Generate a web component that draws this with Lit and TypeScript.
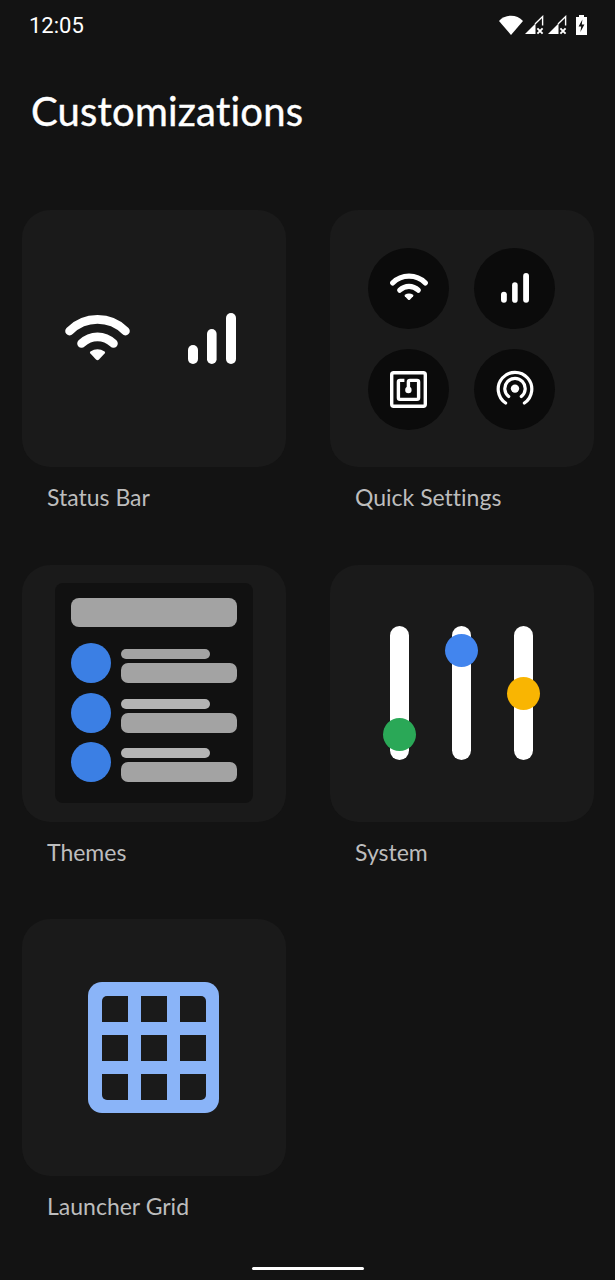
import { LitElement, css, html, svg } from "lit";
import { customElement } from "lit/decorators.js";

const wifiIcon = (w: number) => html`<svg width=${w} viewBox="0 0 65 50" style="display:block">
  <g fill="none" stroke="#fff" stroke-linecap="round" stroke-width="8.8">
    <path d="M4.6 17 C20 1.6 45 1.6 60.4 17" />
    <path d="M16.6 29.4 C26 20.6 39 20.6 48.4 29.4" />
  </g>
  <path d="M25.4 37.4 Q32.5 33 39.6 37.4 Q40.6 38.4 39.6 39.6 L34 45.6 Q32.5 47 31 45.6 L25.4 39.6 Q24.4 38.4 25.4 37.4Z" fill="#fff" />
</svg>`;

const signalIcon = (w: number) => html`<svg width=${w} viewBox="0 0 48 51" style="display:block">
  <g fill="#fff">
    <rect x="0" y="32" width="10" height="19" rx="5" />
    <rect x="19" y="16" width="9.6" height="35" rx="4.8" />
    <rect x="38" y="0" width="10" height="51" rx="5" />
  </g>
</svg>`;

const nfcIcon = html`<svg width="37" height="37" viewBox="0 0 37 37" style="display:block">
  <g fill="none" stroke="#fff" stroke-width="3.4">
    <rect x="1.7" y="1.7" width="33.6" height="33.6" rx="2" />
    <path d="M14.4 9.4 H10 Q8.4 9.4 8.4 11 V26.8 Q8.4 28.4 10 28.4 H27 Q28.6 28.4 28.6 26.8 V11 Q28.6 9.4 27 9.4 H20 Q18.4 9.4 18.4 11 V18" />
  </g>
  <circle cx="18.4" cy="19" r="3.2" fill="#fff" />
</svg>`;

const hotspotIcon = html`<svg width="38" height="38" viewBox="0 0 38 38" style="display:block">
  <g fill="none" stroke="#fff" stroke-width="3.2" stroke-linecap="round">
    <path d="M9.6 33 A16.8 16.8 0 1 1 28.4 33" />
    <path d="M12.7 26.6 A10.2 10.2 0 1 1 25.3 26.6" />
  </g>
  <circle cx="19" cy="18.6" r="4.2" fill="#fff" />
</svg>`;

const GRID_STEPS = [0, 39, 78];
const CELL = 26;
const CORNER = 5;

// Outer corners of the 3x3 grid are rounded, the others stay square.
const cellPath = (x: number, y: number) => {
  const r = CORNER;
  const s = CELL - r;
  const left = 14 + x;
  const top = 14 + y;
  if (x === 0 && y === 0) return `M${left} ${top + r} a${r} ${r} 0 0 1 ${r} -${r} h${s} v${CELL} h-${CELL}Z`;
  if (x === 78 && y === 0) return `M${left} ${top} h${s} a${r} ${r} 0 0 1 ${r} ${r} v${s} h-${CELL}Z`;
  if (x === 0 && y === 78) return `M${left} ${top} h${CELL} v${CELL} h-${s} a${r} ${r} 0 0 1 -${r} -${r}Z`;
  if (x === 78 && y === 78) return `M${left} ${top} h${CELL} v${s} a${r} ${r} 0 0 1 -${r} ${r} h-${s}Z`;
  return `M${left} ${top} h${CELL} v${CELL} h-${CELL}Z`;
};

const gridIcon = html`<svg width="131" height="131" viewBox="0 0 131 131" style="display:block">
  <rect width="131" height="131" rx="14" fill="#8ab4f8" />
  ${GRID_STEPS.flatMap((y) => GRID_STEPS.map((x) => svg`<path d=${cellPath(x, y)} fill="#1a1a1a" />`))}
</svg>`;

const SLIDERS = [
  { top: 91.5, color: "#2aa857" },
  { top: 8, color: "#4285ee" },
  { top: 50.5, color: "#f9b502" },
];

@customElement("app-root")
export class AppRoot extends LitElement {
  static override styles = css`
    :host {
      display: block;
      width: 615px;
      height: 1280px;
      position: relative;
      background: #131313;
      color: #fff;
      font-family: "Lato", "Roboto", sans-serif;
      font-variant-ligatures: none;
      overflow: hidden;
    }
    .status {
      display: flex;
      align-items: center;
      justify-content: space-between;
      height: 50px;
      padding: 0 28px 0 29px;
    }
    .time {
      font: 400 22px "Roboto", sans-serif;
    }
    .status-icons {
      display: block;
    }
    h1 {
      margin: 0;
      padding: 35px 0 0 31px;
      height: 160px;
      box-sizing: border-box;
      font-weight: 400;
      font-size: 40px;
      line-height: 52px;
      letter-spacing: 0.2px;
      -webkit-text-stroke: 0.4px #fff;
    }
    .grid {
      display: grid;
      grid-template-columns: 264px 264px;
      column-gap: 44px;
      grid-auto-rows: 354.5px;
      padding-left: 22px;
    }
    .card {
      height: 257px;
      border-radius: 28px;
      background: #1a1a1a;
      display: flex;
      align-items: center;
      justify-content: center;
      box-sizing: border-box;
    }
    .label {
      margin: 16px 0 0 25px;
      font-size: 23px;
      line-height: 28px;
      color: #bdbdbd;
    }
    .status-card {
      gap: 58px;
      padding-right: 7px;
    }
    .qs {
      display: grid;
      grid-template-columns: 81px 81px;
      grid-auto-rows: 81px;
      gap: 20px 25px;
      margin-right: 1px;
    }
    .qs > div {
      border-radius: 50%;
      background: #0b0b0b;
      display: flex;
      align-items: center;
      justify-content: center;
    }
    .panel {
      width: 198px;
      height: 220px;
      border-radius: 8px;
      background: #111;
      box-sizing: border-box;
      padding: 15px 16px 0;
      display: flex;
      flex-direction: column;
      gap: 16px;
    }
    .panel-head {
      height: 29px;
      border-radius: 8px;
      background: #a3a3a3;
    }
    .rows {
      display: flex;
      flex-direction: column;
      gap: 9.5px;
    }
    .row {
      display: flex;
      gap: 10px;
      align-items: stretch;
      height: 40px;
    }
    .dot {
      width: 40px;
      height: 40px;
      border-radius: 50%;
      background: #3b7fe4;
    }
    .lines {
      flex: 1;
      display: flex;
      flex-direction: column;
      justify-content: flex-end;
      gap: 4px;
    }
    .line-s {
      width: 89px;
      height: 10px;
      border-radius: 5px;
      background: #b4b4b4;
    }
    .row:first-child .line-s {
      background: #a3a3a3;
    }
    .line-l {
      height: 20px;
      border-radius: 7px;
      background: #a3a3a3;
    }
    .sliders {
      display: flex;
      gap: 43px;
      margin-right: 1px;
    }
    .track {
      position: relative;
      width: 19px;
      height: 134px;
      border-radius: 9.5px;
      background: #fff;
    }
    .knob {
      position: absolute;
      left: -7px;
      width: 33px;
      height: 33px;
      border-radius: 50%;
    }
    .launcher {
      padding-right: 1px;
    }
    .home {
      position: absolute;
      left: 252px;
      top: 1267px;
      width: 112px;
      height: 3px;
      border-radius: 2px;
      background: #fff;
    }
  `;

  private renderStatusIcons() {
    const cell = (x: number) => svg`<g transform="translate(${x} 0)">
      <path d="M0 19 L10.5 8.5 V19Z" fill="#fff" />
      <path d="M10 9 L17.6 1.6 V10.5" stroke="#fff" stroke-width="1.4" fill="none" />
      <path d="M12.4 13.4 L17.6 18.6 M17.6 13.4 L12.4 18.6" stroke="#fff" stroke-width="1.9" fill="none" />
    </g>`;
    return html`<svg class="status-icons" width="88" height="20" viewBox="0 0 88 20">
      <path d="M0 6 C6 -1 18 -1 24 6 L12 20Z" fill="#fff" />
      ${cell(26)}
      ${cell(49)}
      <path fill="#fff" fill-rule="evenodd" d="M80 0 h5 v2 h3 v18 h-11 v-18 h3Z M83.4 4.4 L79.6 11.4 H82.2 L81.4 17 L85.4 9.6 H82.8Z" />
    </svg>`;
  }

  override render() {
    return html`
      <div class="status">
        <span class="time">12:05</span>
        ${this.renderStatusIcons()}
      </div>
      <h1>Customizations</h1>
      <div class="grid">
        <div>
          <div class="card status-card">${wifiIcon(65)}${signalIcon(48)}</div>
          <div class="label">Status Bar</div>
        </div>
        <div>
          <div class="card">
            <div class="qs">
              <div>${wifiIcon(38)}</div>
              <div>${signalIcon(28)}</div>
              <div>${nfcIcon}</div>
              <div>${hotspotIcon}</div>
            </div>
          </div>
          <div class="label">Quick Settings</div>
        </div>
        <div>
          <div class="card">
            <div class="panel">
              <div class="panel-head"></div>
              <div class="rows">
                ${[0, 1, 2].map(
                  () => html`<div class="row">
                    <div class="dot"></div>
                    <div class="lines"><div class="line-s"></div><div class="line-l"></div></div>
                  </div>`
                )}
              </div>
            </div>
          </div>
          <div class="label">Themes</div>
        </div>
        <div>
          <div class="card">
            <div class="sliders">
              ${SLIDERS.map(
                (s) => html`<div class="track">
                  <div class="knob" style="top:${s.top}px;background:${s.color}"></div>
                </div>`
              )}
            </div>
          </div>
          <div class="label">System</div>
        </div>
        <div>
          <div class="card launcher">${gridIcon}</div>
          <div class="label">Launcher Grid</div>
        </div>
      </div>
      <div class="home"></div>
    `;
  }
}

declare global {
  interface HTMLElementTagNameMap {
    "app-root": AppRoot;
  }
}
